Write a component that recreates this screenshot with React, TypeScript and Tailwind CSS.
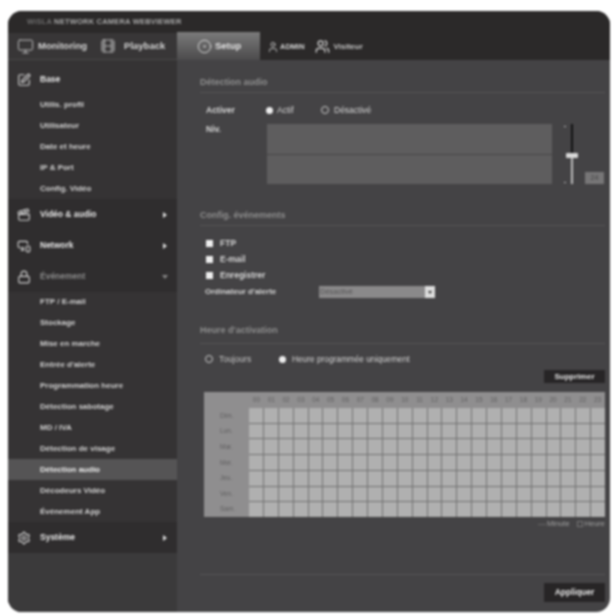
import React from "react";
import { Monitor, Film, CircleDot, User, Users, SquarePen, Clapperboard, MonitorSmartphone, Lock, Settings } from "lucide-react";

const font = "font-['Liberation_Sans',Arial,sans-serif]";

function Sub({ label, active }: { label: string; active?: boolean }) {
  return (
    <div className={`h-[21px] pl-[32px] flex items-center text-[8px] font-bold ${active ? "bg-[#555455] text-[#eeeeee]" : "text-[#d2d2d2]"}`}>
      {label}
    </div>
  );
}

function Group({ icon, label, arrow, dim, className }: { icon: React.ReactNode; label: string; arrow?: "right" | "down"; dim?: boolean; className?: string }) {
  return (
    <div className={`flex items-center ${className ?? "h-[31px] bg-[#2f2d2e]"}`}>
      <div className="w-[32px] pl-[9px] flex items-center text-[#cfcfcf]">{icon}</div>
      <div className={`flex-1 text-[8.5px] font-bold ${dim ? "text-[#8c8c8c]" : "text-[#e8e8e8]"}`}>{label}</div>
      {arrow === "right" && <div className="w-0 h-0 mr-[10px] border-y-[3px] border-y-transparent border-l-[4px] border-l-[#dddddd]" />}
      {arrow === "down" && <div className="w-0 h-0 mr-[9px] border-x-[3px] border-x-transparent border-t-[4px] border-t-[#888888]" />}
    </div>
  );
}

function Section({ title, className }: { title: string; className?: string }) {
  return (
    <div className={`border-b border-[#555455] text-[9px] font-bold text-[#8f8f8f] ${className ?? ""}`}>{title}</div>
  );
}

function Radio({ on }: { on?: boolean }) {
  return on ? (
    <span className="w-[7px] h-[7px] rounded-full bg-[#eeeeee] inline-block shrink-0" />
  ) : (
    <span className="w-[8px] h-[8px] rounded-full border border-[#cccccc] inline-block shrink-0" />
  );
}

function Check({ label }: { label: string }) {
  return (
    <div className="h-[16px] flex items-center gap-[7px] pl-[6px]">
      <span className="w-[7px] h-[7px] bg-[#eeeeee] inline-block" />
      <span className="text-[8.5px] font-bold text-[#d6d6d6]">{label}</span>
    </div>
  );
}

const days = ["Dim.", "Lun.", "Mar.", "Mer.", "Jeu.", "Ven.", "Sam."];
const hours = Array.from({ length: 24 }, (_, i) => String(i).padStart(2, "0"));

export default function App() {
  return (
    <div className={`w-[614px] h-[614px] bg-white pt-[11px] pl-[8px] overflow-hidden blur-[1px] ${font}`}>
      <div className="w-[602px] h-[601px] rounded-[14px] overflow-hidden flex flex-col bg-[#444345]">
        {/* Title */}
        <div className="h-[22px] shrink-0 bg-[#2b2929] pl-[19px] flex items-center text-[7.5px] font-bold text-[#a9a9a9] tracking-[0.2px]">
          <span className="text-[#6f6f6f] mr-[2px]">WiSLA</span> NETWORK CAMERA WEBVIEWER
        </div>
        {/* Nav */}
        <div className="h-[27px] shrink-0 bg-[#2b2929] flex items-stretch">
          <div className="w-[169px] flex items-center border-b border-[#4a4949] bg-[#383637] pl-[9px]">
            <Monitor size={17} strokeWidth={1.4} className="text-[#bdbdbd]" />
            <span className="ml-[4px] text-[9.5px] font-bold text-[#d5d5d5]">Monitoring</span>
            <Film size={16} strokeWidth={1.4} className="ml-[13px] text-[#bdbdbd]" />
            <span className="ml-[8px] text-[9.5px] font-bold text-[#d5d5d5]">Playback</span>
          </div>
          <div className="w-[83px] -mt-px flex items-center pl-[20px] bg-gradient-to-b from-[#7b7b7b] to-[#4c4b4c]">
            <CircleDot size={15} strokeWidth={1.4} className="text-[#e6e6e6]" />
            <span className="ml-[3px] text-[9.5px] font-bold text-[#e6e6e6]">Setup</span>
          </div>
          <div className="flex items-center pl-[7px]">
            <User size={12} strokeWidth={2} className="text-[#c4c4c4]" />
            <span className="ml-[1px] text-[7.5px] font-bold text-[#d5d5d5]">ADMIN</span>
            <Users size={15} strokeWidth={2} className="ml-[10px] text-[#d5d5d5]" />
            <span className="ml-[4px] text-[8px] font-bold text-[#c4c4c4]">Visiteur</span>
          </div>
        </div>

        <div className="flex-1 flex min-h-0">
          {/* Sidebar */}
          <div className="w-[169px] shrink-0 bg-[#353334] flex flex-col">
            <Group icon={<SquarePen size={14} />} label="Base" className="h-[34px] pt-[5px] bg-[#353334]" />
            <div className="flex flex-col">
              {["Utilis. profil", "Utilisateur", "Date et heure", "IP & Port", "Config. Vidéo"].map((s) => (
                <Sub key={s} label={s} />
              ))}
            </div>
            <Group icon={<Clapperboard size={14} />} label="Vidéo & audio" arrow="right" />
            <Group icon={<MonitorSmartphone size={14} />} label="Network" arrow="right" />
            <Group icon={<Lock size={14} />} label="Événement" arrow="down" dim />
            <div className="flex flex-col -mt-px">
              {["FTP / E-mail", "Stockage", "Mise en marche", "Entrée d'alerte", "Programmation heure", "Détection sabotage", "MD / IVA", "Détection de visage", "Détection audio", "Décodeurs Vidéo", "Événement App"].map((s) => (
                <Sub key={s} label={s} active={s === "Détection audio"} />
              ))}
            </div>
            <Group icon={<Settings size={14} />} label="Système" arrow="right" />
            <div className="flex-1 bg-[#3b3a3b]" />
          </div>

          {/* Content */}
          <div className="flex-1 min-w-0 flex flex-col pl-[23px] pr-[5px]">
            <Section title="Détection audio" className="mt-[16px] h-[17px]" />
            <div className="mt-[11px] h-[12px] flex items-center pl-[6px] text-[8.5px] font-bold text-[#d6d6d6]">
              <span className="w-[60px]">Activer</span>
              <Radio on />
              <span className="ml-[4px] w-[44px] font-normal">Actif</span>
              <Radio />
              <span className="ml-[5px] font-normal">Désactivé</span>
            </div>
            <div className="mt-[8px] flex pl-[6px]">
              <span className="w-[61px] leading-[10px] text-[8.5px] font-bold text-[#d6d6d6]">Niv.</span>
              <div className="w-[285px] h-[60px] bg-[#5e5d5e] flex flex-col justify-center">
                <div className="h-px bg-[#454445]" />
              </div>
              <div className="relative w-[33px] h-[60px]">
                <div className="absolute left-[12px] top-[2px] w-[2px] h-[1px] bg-[#bbbbbb]" />
                <div className="absolute left-[12px] top-[58px] w-[2px] h-[1px] bg-[#bbbbbb]" />
                <div className="absolute left-[19px] top-0 w-[2px] h-[31px] bg-[#111111]" />
                <div className="absolute left-[19px] top-[31px] w-[2px] h-[29px] bg-[#bdbdbd]" />
                <div className="absolute left-[14px] top-[29px] w-[12px] h-[5px] rounded-[1px] bg-[#d8d8d8]" />
              </div>
              <div className="mt-[48px] w-[19px] h-[12px] bg-[#777677] flex items-center justify-center text-[7px] text-[#444444]">24</div>
            </div>

            <Section title="Config. événements" className="mt-[25px] h-[17px]" />
            <div className="mt-[9px] flex flex-col">
              <Check label="FTP" />
              <Check label="E-mail" />
              <Check label="Enregistrer" />
            </div>
            <div className="mt-[3px] h-[12px] flex items-center pl-[5px]">
              <span className="w-[114px] text-[8px] font-bold text-[#d6d6d6]">Ordinateur d'alerte</span>
              <div className="w-[116px] h-[12px] bg-[#8a898a] flex items-center justify-between">
                <span className="pl-[1px] text-[7.5px] text-[#555455]">Désactivé</span>
                <span className="w-[10px] h-[12px] bg-[#dddddd] flex items-center justify-center">
                  <span className="w-0 h-0 border-x-[2.5px] border-x-transparent border-t-[3px] border-t-[#333333]" />
                </span>
              </div>
            </div>

            <Section title="Heure d'activation" className="mt-[26px] h-[20px]" />
            <div className="mt-[9px] h-[12px] flex items-center pl-[5px]">
              <Radio />
              <span className="ml-[6px] w-[60px] text-[8.5px] text-[#c4c4c4]">Toujours</span>
              <Radio on />
              <span className="ml-[6px] text-[8.3px] text-[#d6d6d6]">Heure programmée uniquement</span>
            </div>
            <div className="flex justify-end mt-[5px]">
              <div className="w-[61px] h-[13px] bg-[#272526] flex items-center justify-center text-[8px] font-bold text-[#e6e6e6]">Supprimer</div>
            </div>
            {/* Schedule */}
            <div className="mt-[9px] ml-[4px] h-[126px] bg-[#8f8e8f] grid grid-cols-[45px_1fr] grid-rows-[16px_1fr] border-b border-[#3c3b3c]">
              <div />
              <div className="grid grid-cols-[repeat(24,1fr)]">
                {hours.map((h) => (
                  <span key={h} className="text-[6.5px] text-[#5f5e5f] flex items-center justify-center">{h}</span>
                ))}
              </div>
              <div className="grid grid-rows-7">
                {days.map((d) => (
                  <div key={d} className="pl-[16px] flex items-center text-[6.5px] text-[#5f5e5f]">{d}</div>
                ))}
              </div>
              <div className="grid grid-cols-[repeat(24,1fr)] grid-rows-7 gap-px bg-[#707070]">
                {days.flatMap((d) =>
                  hours.map((h) => <span key={d + h} className="bg-[#b0b0b0]" />)
                )}
              </div>
            </div>
            <div className="h-[12px] flex items-center justify-end text-[7.5px] text-[#a0a0a0]">
              <span className="w-[8px] h-[1px] bg-[#666566] mr-[1px]" />
              <span>Minute</span>
              <span className="ml-[7px] w-[6px] h-[6px] border border-[#777677] mr-[2px]" />
              <span>Heure</span>
            </div>

            <div className="flex-1" />
            <div className="border-t border-[#565556]" />
            <div className="flex justify-end mt-[8px] mb-[10px]">
              <div className="w-[61px] h-[19px] bg-[#272526] flex items-center justify-center text-[8.5px] font-bold text-[#e6e6e6]">Appliquer</div>
            </div>
          </div>
        </div>
      </div>
    </div>
  );
}
